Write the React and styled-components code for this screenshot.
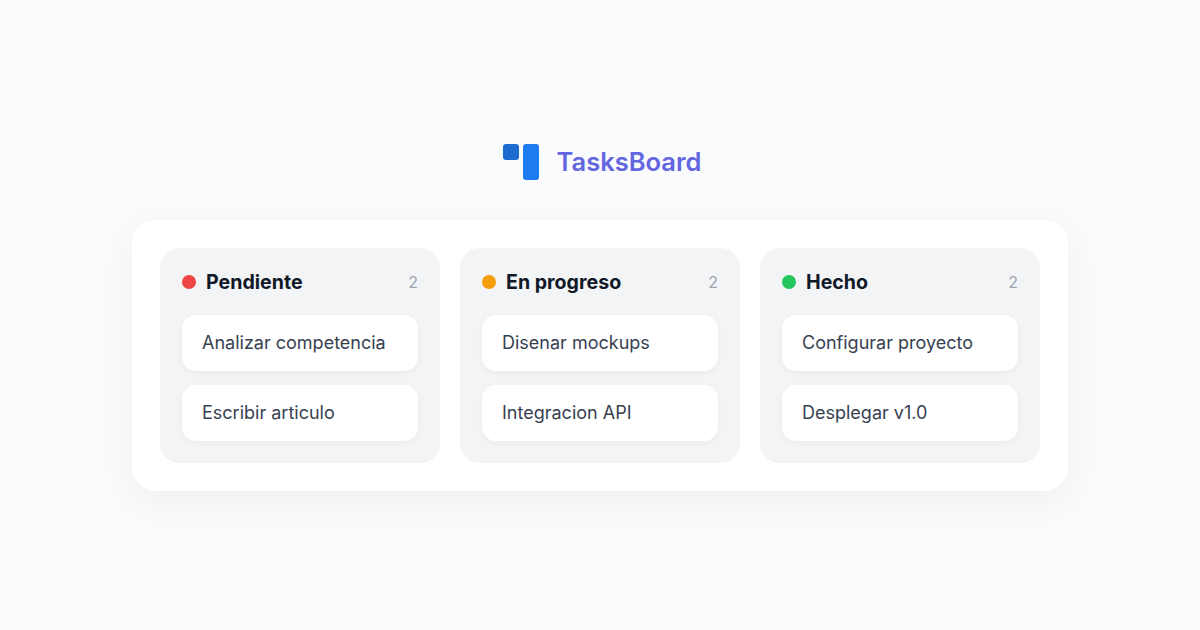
import React from 'react';
import styled, { createGlobalStyle } from 'styled-components';

const Global = createGlobalStyle`
  html, body { margin: 0; padding: 0; }
  body { background: #fafbfd; font-family: "Inter", "Liberation Sans", sans-serif; }
`;
const Page = styled.div`
  width: 1200px; height: 630px; padding-top: 5px; display: flex; flex-direction: column; align-items: center; justify-content: center; gap: 40px; box-sizing: border-box;
`;
const Brand = styled.div`
  display: flex; align-items: center; gap: 18px; height: 36px; padding-left: 4px;
`;
const LogoMark = styled.svg`
  width: 36px; height: 36px; display: block;
`;
const BrandName = styled.span`
  font-size: 25.5px; font-weight: 600; color: #6366e1; line-height: 36px;
`;
const Board = styled.div`
  width: 936px; box-sizing: border-box; padding: 28px; background: #fff; border-radius: 24px; display: flex; gap: 20px;
  box-shadow: 0 10px 40px rgba(0,0,0,0.05);
`;
const Column = styled.section`
  flex: 1; box-sizing: border-box; padding: 22px; background: #f3f4f6; border-radius: 20px; display: flex; flex-direction: column; gap: 14px;
`;
const ColumnHead = styled.header`
  display: flex; align-items: center; height: 24px; margin-bottom: 7px;
`;
const Dot = styled.span`
  width: 14px; height: 14px; border-radius: 50%; background: ${p => p.$color}; margin-right: 10px; flex: none;
`;
const Title = styled.h2`
  margin: 0; font-size: 19.6px; font-weight: 700; color: #111827; flex: 1;
`;
const Count = styled.span`
  font-size: 16px; color: #9ca3af;
`;
const Task = styled.div`
  height: 56px; box-sizing: border-box; padding: 0 20px 2px; background: #fff; border-radius: 14px; display: flex; align-items: center;
  font-size: 18px; color: #374151; box-shadow: 0 2px 6px rgba(0,0,0,0.04);
`;
const columns = [
  { name: 'Pendiente', color: '#ef4444', tasks: ['Analizar competencia', 'Escribir articulo'] },
  { name: 'En progreso', color: '#f59e0b', tasks: ['Disenar mockups', 'Integracion API'] },
  { name: 'Hecho', color: '#22c55e', tasks: ['Configurar proyecto', 'Desplegar v1.0'] },
];
export default function App() {
  return (
    <Page>
      <Global />
      <Brand>
        <LogoMark viewBox="0 0 36 36">
          <rect x="0" y="0" width="16" height="16" rx="3" fill="#1e6bd0" />
          <rect x="20" y="0" width="16" height="36" rx="3" fill="#1d7bf2" />
        </LogoMark>
        <BrandName>TasksBoard</BrandName>
      </Brand>
      <Board>
        {columns.map(c => (
          <Column key={c.name}>
            <ColumnHead>
              <Dot $color={c.color} />
              <Title>{c.name}</Title>
              <Count>{c.tasks.length}</Count>
            </ColumnHead>
            {c.tasks.map(t => <Task key={t}>{t}</Task>)}
          </Column>
        ))}
      </Board>
    </Page>
  );
}
